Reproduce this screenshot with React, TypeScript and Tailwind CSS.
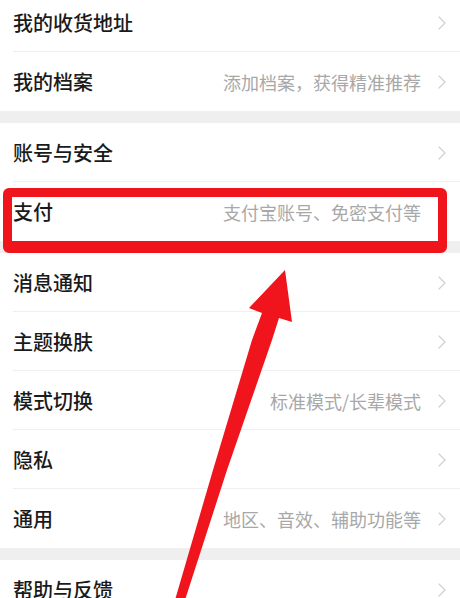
import React from "react"

interface Row {
  title: string
  hint?: string
}

const sections: Row[][] = [
  [{ title: "我的收货地址" }, { title: "我的档案", hint: "添加档案，获得精准推荐" }],
  [{ title: "账号与安全" }, { title: "支付", hint: "支付宝账号、免密支付等" }],
  [
    { title: "消息通知" },
    { title: "主题换肤" },
    { title: "模式切换", hint: "标准模式/长辈模式" },
    { title: "隐私" },
    { title: "通用", hint: "地区、音效、辅助功能等" },
  ],
  [{ title: "帮助与反馈" }],
]

const Chevron = () => (
  <svg width="8" height="14" viewBox="0 0 8 14" fill="none" className="shrink-0">
    <path d="M1 1l6 6-6 6" stroke="#d0d0d0" strokeWidth="1.2" strokeLinecap="round" strokeLinejoin="round" />
  </svg>
)

const SettingRow = ({ title, hint, last }: Row & { last: boolean }) => (
  <div className="relative flex h-[59px] items-center pl-[13px] pr-[14px]">
    <span className="text-[20px] font-medium leading-none text-[#1a1a1a]">{title}</span>
    <div className="ml-auto flex items-center gap-[17px]">
      {hint && <span className="text-[18px] leading-none text-[#a8a8a8]">{hint}</span>}
      <Chevron />
    </div>
    {!last && <div className="absolute bottom-0 left-[13px] right-0 h-px bg-[#efefef]" />}
  </div>
)

export default function App() {
  return (
    <div
      className="relative h-[598px] w-[460px] overflow-hidden bg-[#efefef]"
      style={{ fontFamily: '"Noto Sans CJK SC", "Noto Sans", sans-serif' }}
    >
      <div className="-mt-[7px] flex flex-col gap-[12px]">
        {sections.map((rows, i) => (
          <div key={i} className="bg-white">
            {rows.map((r, j) => (
              <SettingRow key={r.title} {...r} last={j === rows.length - 1} />
            ))}
          </div>
        ))}
      </div>

      {/* red highlight box */}
      <div className="absolute left-[3px] top-[188px] h-[65px] w-[444px] rounded-[6px] border-[9px] border-b-[12px] border-[#f0151d]" />

      {/* red arrow */}
      <svg className="absolute left-0 top-0" width="460" height="598" viewBox="0 0 460 598">
        <polygon
          points="285,270 292,322 279,318 272,340 227,470 185,600 175,600 213,470 252,340 262,313 249,308"
          fill="#f0151d"
        />
      </svg>
    </div>
  )
}
